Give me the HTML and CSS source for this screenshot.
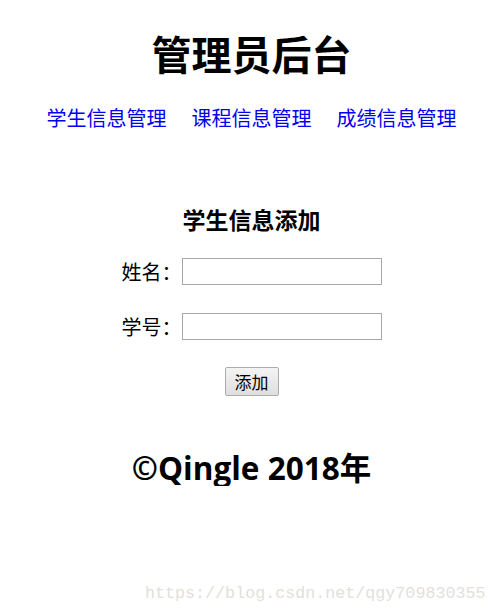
FILE: index.html
```html
<!DOCTYPE html>
<html lang="zh-CN">
<head>
    <meta charset="UTF-8">
    <title>管理员后台</title>
    <link rel="stylesheet" href="styles.css">
</head>
<body>
    <div class="page">
        <h1 class="title">管理员后台</h1>
        <nav class="menu">
            <a href="#">学生信息管理</a>
            <a href="#">课程信息管理</a>
            <a href="#">成绩信息管理</a>
        </nav>

        <h3 class="form-title">学生信息添加</h3>
        <form class="add-form">
            <div class="field">
                <label>姓名：</label>
                <input type="text">
            </div>
            <div class="field">
                <label>学号：</label>
                <input type="text">
            </div>
            <div class="actions">
                <button type="button" class="add-btn">添加</button>
            </div>
        </form>

        <h2 class="footer">©Qingle 2018年</h2>
    </div>
    <div class="watermark">https://blog.csdn.net/qgy709830355</div>
</body>
</html>
```

FILE: styles.css
```css
body {
    margin: 8px 0 8px 8px;
    font-family: "Noto Sans CJK SC", "Noto Sans", sans-serif;
    font-size: 20px;
    color: #000;
    background: #fff;
}

.page {
    display: flex;
    flex-direction: column;
    align-items: center;
}

.title {
    margin: 21px 0 0;
    font-size: 40px;
    line-height: 48px;
    font-weight: bold;
}

.menu {
    display: flex;
    gap: 25px;
    margin-top: 29px;
    line-height: 24px;
}

.menu a {
    color: #0000ee;
    text-decoration: none;
}

.form-title {
    margin: 75px 0 0;
    font-size: 23px;
    line-height: 28px;
}

.add-form {
    display: flex;
    flex-direction: column;
    align-items: center;
    margin-top: 25px;
}

.field {
    display: flex;
    align-items: center;
    height: 27px;
    margin-bottom: 28px;
}

.field label {
    width: 60px;
    line-height: 27px;
}

.field input {
    box-sizing: border-box;
    width: 200px;
    height: 27px;
    border: 1px solid #a9a9a9;
    padding: 0 4px;
    margin: 0;
}

.actions {
    margin-top: -2px;
}

.add-btn {
    box-sizing: border-box;
    width: 54px;
    height: 29px;
    padding: 0;
    font-family: inherit;
    font-size: 17px;
    color: #000;
    background: linear-gradient(#f4f4f4, #dedede);
    border: 1px solid #acacac;
    border-radius: 2px;
}

.footer {
    margin: 54px 0 0;
    font-family: "Open Sans", "Noto Sans CJK SC", sans-serif;
    font-size: 31.5px;
    line-height: 36px;
}

.watermark {
    position: absolute;
    left: 145px;
    top: 584px;
    font-family: "Liberation Mono", monospace;
    font-size: 16.7px;
    color: #e3e0da;
}
```
